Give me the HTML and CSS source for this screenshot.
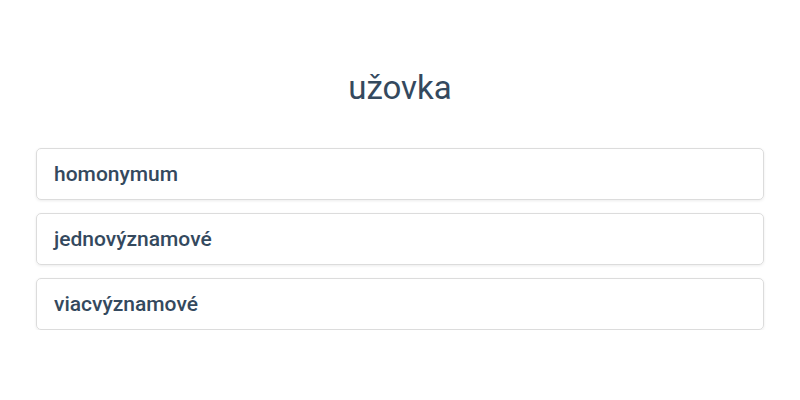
FILE: index.html
```html
<!DOCTYPE html>
<html>
<head>
<meta charset="utf-8">
<link rel="stylesheet" href="styles.css">
</head>
<body>
<div class="page">
  <h1 class="title">užovka</h1>
  <div class="list">
    <div class="item">homonymum</div>
    <div class="item">jednovýznamové</div>
    <div class="item">viacvýznamové</div>
  </div>
</div>
</body>
</html>
```
FILE: styles.css
```css
html, body {
  margin: 0;
  padding: 0;
  background: #ffffff;
}
.page {
  font-family: Roboto, "Liberation Sans", sans-serif;
  color: #34495e;
  padding: 64px 36px 0 36px;
}
.title {
  margin: 0;
  font-size: 33px;
  font-weight: 400;
  line-height: 48px;
  text-align: center;
}
.list {
  display: flex;
  flex-direction: column;
  gap: 13px;
  margin-top: 36px;
}
.item {
  box-sizing: border-box;
  height: 52px;
  border: 1px solid #dcdcdc;
  border-radius: 5px;
  box-shadow: 0 1px 3px rgba(0,0,0,0.08);
  padding: 0 17px;
  display: flex;
  align-items: center;
  font-size: 21px;
  font-weight: 500;
}
```
